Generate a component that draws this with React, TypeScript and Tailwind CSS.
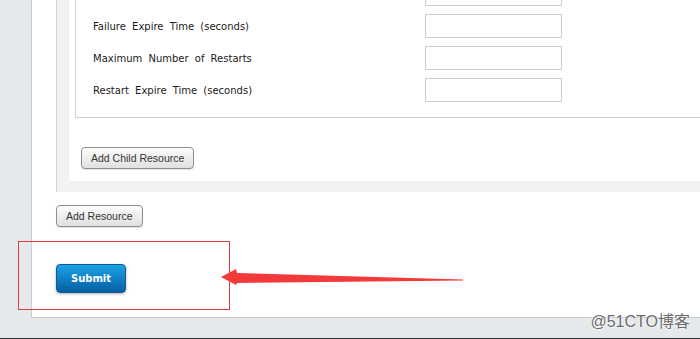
import React from 'react';

const rows = [
  '',
  'Failure Expire Time (seconds)',
  'Maximum Number of Restarts',
  'Restart Expire Time (seconds)',
];

function GrayButton({ children }: { children: React.ReactNode }) {
  return (
    <button className="flex h-[22px] items-center rounded-[4px] border border-[#8e8e8e] bg-gradient-to-b from-[#fdfdfd] to-[#e0e0e0] px-[9px] font-['Liberation_Sans',Arial,sans-serif] text-[10.5px] leading-none text-[#333] shadow-[0_1px_1px_rgba(0,0,0,0.12)]">
      {children}
    </button>
  );
}

export default function App() {
  return (
    <div className="relative h-[339px] w-[700px] overflow-hidden bg-[#e6e9ec]">
      <div className="ml-[31px] flex w-[720px] flex-col border-b border-l border-[#c9ccd0] bg-white pb-[24px] pl-[24px]">
        <div className="-mt-[50px] flex flex-col border-l border-[#cfd1d3] bg-[#f2f2f2] pb-[11px] pl-[12px] pt-[13px]">
          <div className="flex flex-col bg-white pb-[12px] pl-[6px] pt-[6px]">
            <div className="flex flex-col gap-[8px] border border-[#ced2d6] pb-[15px] pl-[17px] pt-[12px]">
              {rows.map((r, i) => (
                <div key={i} className="flex h-[24px] items-center">
                  <span className="w-[332px] font-['DejaVu_Sans',Verdana,sans-serif] text-[10px] text-[#1a1a1a] [word-spacing:3px]">
                    {r}
                  </span>
                  <input className="h-[24px] w-[137px] border border-[#c8ccd0] bg-white outline-none" />
                </div>
              ))}
            </div>
            <div className="ml-[6px] mt-[29px] flex">
              <GrayButton>Add Child Resource</GrayButton>
            </div>
          </div>
        </div>
        <div className="mt-[13px] flex">
          <GrayButton>Add Resource</GrayButton>
        </div>
        <div className="mt-[37px] flex">
          <button className="flex h-[29px] w-[70px] items-center justify-center rounded-[4px] border border-[#0b5a96] bg-gradient-to-b from-[#1ea2e6] to-[#055fa3] font-['DejaVu_Sans',Verdana,sans-serif] text-[10px] font-bold text-white shadow-[0_1px_3px_rgba(0,0,0,0.3)]">
            Submit
          </button>
        </div>
      </div>
      <div className="mt-[20px] h-[1px] bg-[#2e3032]" />

      {/* annotation overlay */}
      <div className="absolute left-[18px] top-[241px] h-[69px] w-[212px] border border-[#e53b3b]" />
      <svg className="absolute left-0 top-0" width="700" height="339">
        <polygon
          points="221,277 236,269 237,273 463,279.5 463,280.5 237,283 236,285"
          fill="#f23a3a"
        />
      </svg>
      <div className="absolute bottom-[9px] right-[10px] font-['Liberation_Sans','Noto_Sans_CJK_SC',sans-serif] text-[16px] leading-none text-[#6a6a6a] [text-shadow:0_0_2px_#fff,0_0_2px_#fff]">
        @51CTO博客
      </div>
    </div>
  );
}
